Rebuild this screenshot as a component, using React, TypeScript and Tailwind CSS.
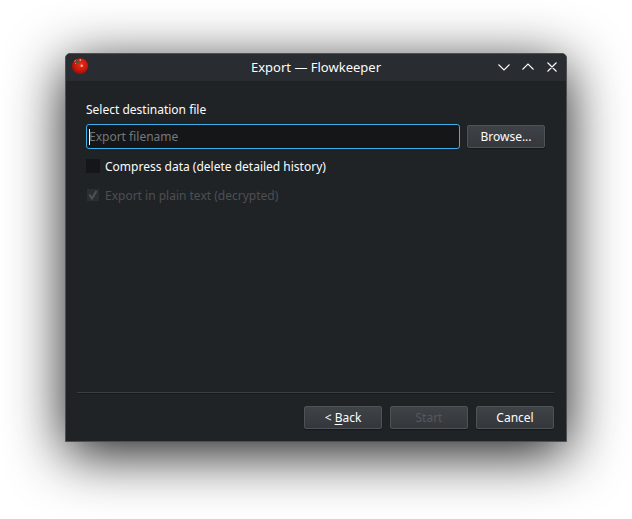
import type { ReactNode } from "react";

function Tomato() {
  return (
    <svg width="18" height="18" viewBox="0 0 18 18">
      <defs>
        <radialGradient id="skin" cx="0.55" cy="0.4" r="0.65">
          <stop offset="0" stopColor="#e8301c" />
          <stop offset="0.55" stopColor="#cc1a0c" />
          <stop offset="1" stopColor="#8d1008" />
        </radialGradient>
      </defs>
      <ellipse cx="9" cy="9.1" rx="8.1" ry="7.9" fill="url(#skin)" />
      <path d="M3.400 5 5.400 4 6.200 2.500 7.300 3.800 8.600 3.400 8 4.800 8.300 6.600 6.600 5.400 4.800 6.600 5 5.100Z" fill="#4d5a35" />
      <path d="M3 4.700 5.200 2.900M4 6.800l1.200-.7" stroke="#c99a86" strokeWidth="0.8" />
      <circle cx="10.700" cy="8.700" r="1.200" fill="#ffb5a6" />
      <circle cx="9.300" cy="3.100" r="0.900" fill="#efb0a0" />
    </svg>
  );
}

function Button({ children, disabled }: { children: ReactNode; disabled?: boolean }) {
  return (
    <button
      disabled={disabled}
      className="flex h-[23px] w-[78px] items-center justify-center rounded-[2px] border border-[#505356] bg-linear-to-b from-[#3f4247] to-[#34373b] text-[#fcfcfc] shadow-[0_1px_1px_rgba(0,0,0,0.35)] disabled:text-[#55585d]"
    >
      <span className="whitespace-pre">{children}</span>
    </button>
  );
}

export default function App() {
  return (
    <div className="flex h-[519px] w-[632px] overflow-hidden bg-white pt-[53px] pl-[65px] font-['Noto_Sans',sans-serif] text-[12px] leading-4 text-[#fcfcfc]">
      <div className="flex h-[389px] w-[502px] flex-col overflow-hidden rounded-t-[5px] border border-[#4d5154] bg-[#202326] shadow-[0_12px_56px_rgba(0,0,0,0.9)]">
        <header className="grid h-[27px] shrink-0 grid-cols-[1fr_auto_1fr] items-center bg-[#292c30]">
          <div className="-mt-[3px] pl-[5px]">
            <Tomato />
          </div>
          <h1 className="-mt-[2px] text-[13px]">Export — Flowkeeper</h1>
          <svg className="-mt-px justify-self-end" width="71" height="18" viewBox="0 0 71 18" fill="none" stroke="#fcfcfc" strokeWidth="1.1">
            <path d="M3.500 6.500 9 12l5.500-5.500M27.500 11.500 33 6l5.500 5.500M52.500 4.500l9 9M61.500 4.500l-9 9" />
          </svg>
        </header>
        <main className="flex grow flex-col px-5 pt-[21px]">
          <label>Select destination file</label>
          <div className="mt-[6px] flex items-center gap-[7px]">
            <div className="flex h-[25px] w-[374px] items-center rounded-[3px] border border-[#3daee9] bg-[#141618] pl-[2px]">
              <span className="h-4 w-px bg-[#fcfcfc]" />
              <span className="-ml-px text-[#75777a]">Export filename</span>
            </div>
            <Button>Browse...</Button>
          </div>
          <div className="mt-[10px] flex items-center gap-[5px]">
            <span className="-mt-0.5 h-[14px] w-[14px] bg-[#141618]" />
            <span>Compress data (delete detailed history)</span>
          </div>
          <div className="mt-[13px] flex items-center gap-[6px] pl-px text-[#4c4f54]">
            <svg className="-mt-0.5" width="12" height="12" viewBox="0 0 12 12" fill="none">
              <path d="M0 0h12v12H0z" fill="#2b2e32" />
              <path d="m2.300 5.500 2.700 4L9.500 2" stroke="#4f5258" strokeWidth="1.900" />
            </svg>
            <span>Export in plain text (decrypted)</span>
          </div>
        </main>
        <footer className="mr-3 ml-[11px] flex h-[49px] shrink-0 justify-end gap-2 border-t border-[#3b3e41] pt-[13px] shadow-[inset_0_1px_0_#17191b]">
          <Button>
            {"< "}
            <span className="underline decoration-1 underline-offset-2">B</span>ack
          </Button>
          <Button disabled>Start</Button>
          <Button>Cancel</Button>
        </footer>
      </div>
    </div>
  );
}
